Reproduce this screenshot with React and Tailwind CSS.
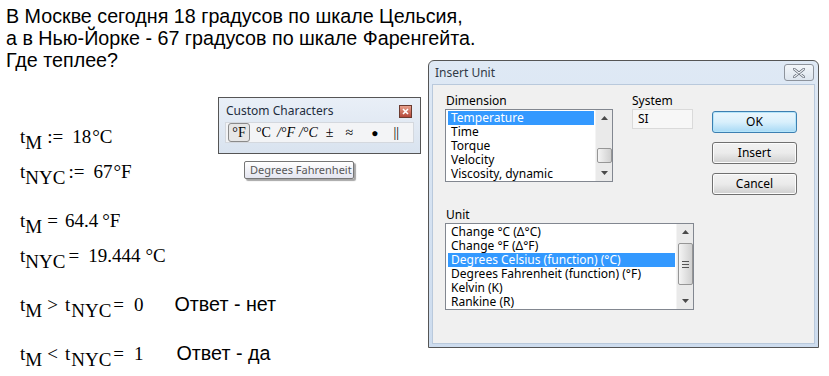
import React from "react";

const T = ({ sub }) => (
  <>
    <span>t</span>
    <span className="relative top-[6px]">{sub}</span>
  </>
);

const ArrowUp = () => (
  <svg width="7" height="4" viewBox="0 0 7 4"><path d="M0 4 L3.5 0 L7 4 Z" fill="#4a4a4a" /></svg>
);
const ArrowDown = () => (
  <svg width="7" height="4" viewBox="0 0 7 4"><path d="M0 0 L3.5 4 L7 0 Z" fill="#4a4a4a" /></svg>
);

function ScrollBar({ thumbTop, thumbH, grip }) {
  return (
    <div className="relative w-[17px] h-full bg-[#eaeaea] border-l border-[#f4f4f4] flex flex-col items-center justify-between py-[6px]">
      <ArrowUp />
      <ArrowDown />
      <div
        className="absolute left-[1px] w-[15px] rounded-[2px] border border-[#969696] bg-gradient-to-r from-[#f4f4f4] via-[#e2e2e2] to-[#d0d0d0] flex flex-col items-center justify-center gap-[2px]"
        style={{ top: thumbTop, height: thumbH }}
      >
        {grip && (
          <>
            <div className="w-[7px] h-px bg-[#555]" />
            <div className="w-[7px] h-px bg-[#555]" />
            <div className="w-[7px] h-px bg-[#555]" />
          </>
        )}
      </div>
    </div>
  );
}

function ListBox({ items, selected, w, h, thumbTop, thumbH, grip }) {
  return (
    <div className="flex bg-white border border-[#828790]" style={{ width: w, height: h }}>
      <div className="flex-1 pt-[1px] pl-[2px] pr-[1px]">
        {items.map((it, i) => (
          <div
            key={it}
            className={`h-[14px] leading-[14px] pl-[3px] whitespace-nowrap ${i === selected ? "bg-[#3399ff] text-white" : "text-black"}`}
          >
            {it}
          </div>
        ))}
      </div>
      <ScrollBar thumbTop={thumbTop} thumbH={thumbH} grip={grip} />
    </div>
  );
}

function Btn({ children, primary }) {
  return (
    <div
      className={`w-[85px] h-[22px] rounded-[3px] border flex items-center justify-center text-[12px] text-black ${
        primary
          ? "border-[#3c7fb1] bg-gradient-to-b from-[#eaf6fd] via-[#d9f0fc] to-[#a7d9f5] shadow-[inset_0_0_0_1px_#b4e5fa]"
          : "border-[#707070] bg-gradient-to-b from-[#f2f2f2] via-[#ebebeb] to-[#cfcfcf] shadow-[inset_0_0_0_1px_#fcfcfc]"
      }`}
    >
      {children}
    </div>
  );
}

export default function App() {
  return (
    <div className="relative w-[829px] h-[376px] bg-white overflow-hidden">
      {/* Question text */}
      <div className="pl-[6px] pt-[5px] font-['Liberation_Sans',sans-serif] text-[19.7px] leading-[22px] text-black">
        <div>В Москве сегодня 18 градусов по шкале Цельсия,</div>
        <div>а в Нью-Йорке - 67 градусов по шкале Фаренгейта.</div>
        <div>Где теплее?</div>
      </div>

      {/* Worksheet math */}
      <div className="pl-[20px] font-['Liberation_Serif',serif] text-[19px] leading-[20px] text-black whitespace-nowrap">
        <div className="mt-[56px]">
          <T sub="M" />
          <span className="ml-[5px]">:=</span>
          <span className="ml-[9px]">18</span>
          <span className="ml-[1px]">°C</span>
        </div>
        <div className="mt-[15px]">
          <T sub="NYC" />
          <span className="ml-[3px]">:=</span>
          <span className="ml-[9px]">67</span>
          <span className="ml-[1px]">°F</span>
        </div>
        <div className="mt-[29px]">
          <T sub="M" />
          <span className="ml-[5px]">=</span>
          <span className="ml-[7px]">64.4</span>
          <span className="ml-[4px]">°F</span>
        </div>
        <div className="mt-[15px]">
          <T sub="NYC" />
          <span className="ml-[3px]">=</span>
          <span className="ml-[9px]">19.444</span>
          <span className="ml-[5px]">°C</span>
        </div>
        <div className="mt-[28px]">
          <T sub="M" />
          <span className="ml-[5px]">&gt;</span>
          <span className="ml-[7px]">t</span>
          <span className="relative top-[6px] ml-[1px]">NYC</span>
          <span className="ml-[2px]">=</span>
          <span className="ml-[10px]">0</span>
          <span className="ml-[31px] font-['Liberation_Sans',sans-serif] text-[19.7px]">Ответ - нет</span>
        </div>
        <div className="mt-[28px]">
          <T sub="M" />
          <span className="ml-[5px]">&lt;</span>
          <span className="ml-[7px]">t</span>
          <span className="relative top-[6px] ml-[1px]">NYC</span>
          <span className="ml-[2px]">=</span>
          <span className="ml-[10px]">1</span>
          <span className="ml-[33px] font-['Liberation_Sans',sans-serif] text-[19.7px]">Ответ - да</span>
        </div>
      </div>

      {/* Custom Characters toolbar window */}
      <div className="absolute left-[218px] top-[97px] w-[203px] h-[57px] border border-[#555] bg-gradient-to-b from-[#e9eff7] to-[#d9e3ef] font-['Noto_Sans',sans-serif]">
        <div className="flex items-center justify-between pl-[7px] pr-[8px] pt-[2px] h-[24px]">
          <span className="text-[12px] text-[#1e2d3d]">Custom Characters</span>
          <div className="w-[13px] h-[13px] border border-[#6b3b30] bg-gradient-to-b from-[#e8a08c] to-[#b4473a] flex items-center justify-center">
            <svg width="7" height="7" viewBox="0 0 7 7">
              <path d="M1 1 L6 6 M6 1 L1 6" stroke="#fff" strokeWidth="1.6" />
            </svg>
          </div>
        </div>
        <div className="mx-[6px] h-[21px] bg-[#f3f4f6] border border-[#d4d8de] flex items-center font-['Liberation_Serif',serif] text-[14px] text-black whitespace-nowrap">
          <div className="ml-[2px] w-[22px] h-[19px] rounded-[3px] border border-[#8a8a8a] bg-[#e6e6e6] flex items-center justify-center">°F</div>
          <span className="ml-[6px]">°C</span>
          <span className="ml-[6px] italic">/°F</span>
          <span className="ml-[4px] italic">/°C</span>
          <span className="ml-[8px]">±</span>
          <span className="ml-[12px]">≈</span>
          <span className="ml-[18px] text-[12px]">●</span>
          <span className="ml-[15px]">||</span>
        </div>
      </div>

      {/* Tooltip */}
      <div className="absolute left-[244px] top-[161px] w-[110px] h-[18px] rounded-[2px] border border-[#767676] bg-gradient-to-b from-white to-[#e4e5f0] shadow-[2px_2px_1px_rgba(0,0,0,0.35)] flex items-center pl-[5px] font-['Noto_Sans',sans-serif] text-[11px] text-[#575757] whitespace-nowrap">
        Degrees Fahrenheit
      </div>

      {/* Insert Unit dialog */}
      <div className="absolute left-[428px] top-[60px] w-[391px] h-[288px] rounded-t-[6px] border border-[#555] bg-gradient-to-b from-[#dfe9f5] to-[#cddcee] flex flex-col font-['Noto_Sans',sans-serif] text-[12px]">
        <div className="h-[23px] flex items-center justify-between pl-[6px] pr-[4px]">
          <span className="text-[#303a46]">Insert Unit</span>
          <div className="w-[30px] h-[17px] rounded-[3px] border border-[#8d939c] bg-gradient-to-b from-[#f3f6fa] to-[#dde5ee] flex items-center justify-center">
            <svg width="12" height="10" viewBox="0 0 12 10">
              <path d="M1 1 L11 9 M11 1 L1 9" stroke="#5c6370" strokeWidth="2.6" strokeLinecap="round" />
              <path d="M1 1 L11 9 M11 1 L1 9" stroke="#f0f3f7" strokeWidth="1.2" strokeLinecap="round" />
            </svg>
          </div>
        </div>
        <div className="flex-1 mx-[3px] mb-[3px] bg-[#f0f0f0] border border-[#b9c9dc] text-black">
          <div className="flex">
            <div className="ml-[12px] pt-[7px]">
              <div className="h-[17px] leading-[17px] pl-[1px]">Dimension</div>
              <ListBox
                items={["Temperature", "Time", "Torque", "Velocity", "Viscosity, dynamic"]}
                selected={0}
                w={168}
                h={73}
                thumbTop={38}
                thumbH={15}
              />
            </div>
            <div className="ml-[19px] pt-[7px]">
              <div className="h-[17px] leading-[17px]">System</div>
              <div className="w-[61px] h-[20px] border border-[#dadada] bg-[#f7f7f7] pl-[5px] leading-[18px]">SI</div>
            </div>
            <div className="ml-[19px] pt-[26px] flex flex-col gap-[9px]">
              <Btn primary>OK</Btn>
              <Btn>Insert</Btn>
              <Btn>Cancel</Btn>
            </div>
          </div>
          <div className="ml-[12px] mt-[11px]">
            <div className="h-[17px] leading-[17px] pl-[1px]">Unit</div>
            <ListBox
              items={[
                "Change °C (Δ°C)",
                "Change °F (Δ°F)",
                "Degrees Celsius (function) (°C)",
                "Degrees Fahrenheit (function) (°F)",
                "Kelvin (K)",
                "Rankine (R)",
              ]}
              selected={2}
              w={249}
              h={87}
              thumbTop={19}
              thumbH={42}
              grip
            />
          </div>
        </div>
      </div>
    </div>
  );
}
